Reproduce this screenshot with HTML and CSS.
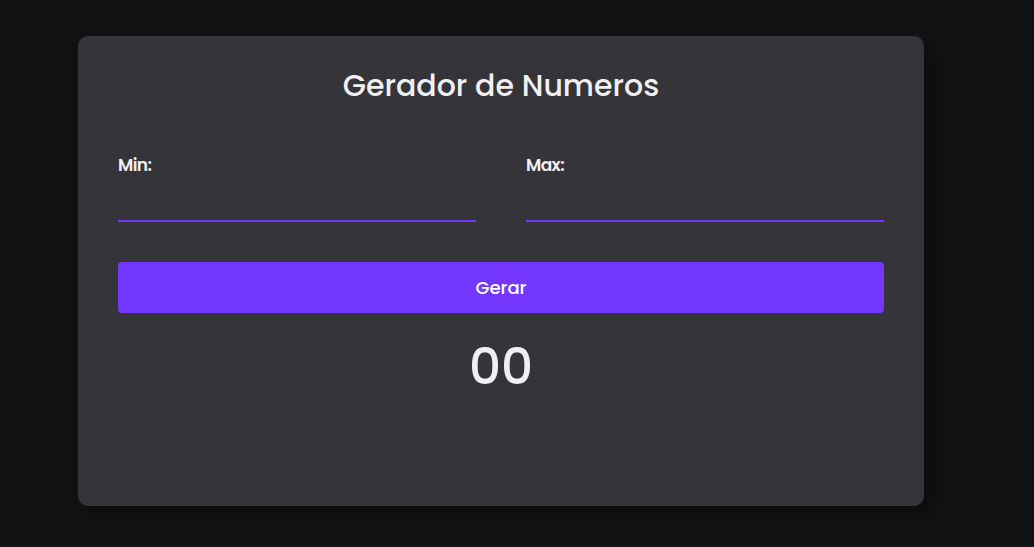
FILE: index.html
```html
<!DOCTYPE html>
<html lang="pt">
<head>
<meta charset="utf-8">
<title>Gerador de Numeros</title>
<link rel="stylesheet" href="styles.css">
</head>
<body>
<main class="card">
  <h1 class="title">Gerador de Numeros</h1>
  <div class="fields">
    <label class="field">
      <span class="field-label">Min:</span>
      <input class="field-input" type="number">
    </label>
    <label class="field">
      <span class="field-label">Max:</span>
      <input class="field-input" type="number">
    </label>
  </div>
  <button class="btn" type="button">Gerar</button>
  <div class="result">00</div>
</main>
</body>
</html>
```

FILE: styles.css
```css
* { box-sizing: border-box; }
html, body { margin: 0; padding: 0; }
body {
  background: #121214;
  font-family: Poppins, "Open Sans", "Noto Sans", sans-serif;
  color: #f0f0f3;
  min-height: 547px;
  padding: 36px 0 0 78px;
}
.card {
  width: 846px;
  height: 470px;
  background: #353439;
  border-radius: 10px;
  box-shadow: 8px 8px 18px rgba(0, 0, 0, 0.35);
  padding: 0 40px;
  display: flex;
  flex-direction: column;
}
.title {
  margin: 30px 0 0;
  font-size: 30px;
  font-weight: 500;
  text-align: center;
  line-height: 40px;
  height: 40px;
}
.fields {
  display: flex;
  gap: 50px;
  margin-top: 46px;
}
.field {
  flex: 1;
  display: flex;
  flex-direction: column;
}
.field-label {
  font-size: 17px;
  font-weight: 600;
  line-height: 27px;
  letter-spacing: -0.6px;
}
.field-input {
  margin-top: 16px;
  height: 27px;
  background: transparent;
  border: none;
  border-bottom: 2px solid #7337ff;
  color: #f0f0f3;
  font: inherit;
  outline: none;
}
.btn {
  margin-top: 40px;
  height: 51px;
  width: 100%;
  border: none;
  border-radius: 4px;
  background: #7337ff;
  color: #ffffff;
  font-family: inherit;
  font-size: 18px;
  font-weight: 500;
}
.result {
  margin-top: 24px;
  text-align: center;
  font-size: 50px;
  font-weight: 500;
  line-height: 60px;
}
```
